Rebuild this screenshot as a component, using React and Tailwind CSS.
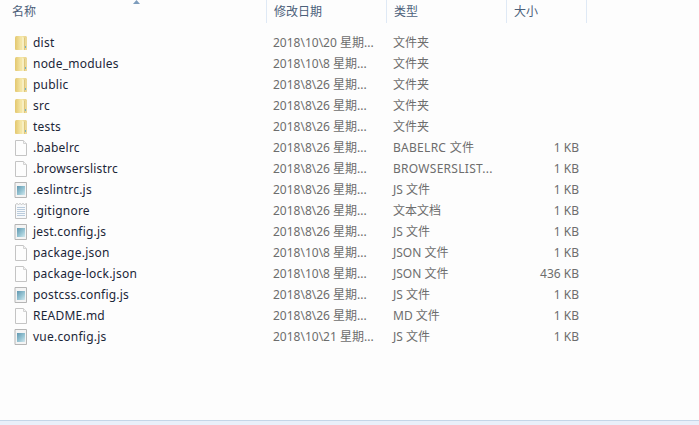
const files = [
  { name: 'dist', date: '2018\\10\\20 星期...', type: '文件夹', icon: 'folder' },
  { name: 'node_modules', date: '2018\\10\\8 星期...', type: '文件夹', icon: 'folder' },
  { name: 'public', date: '2018\\8\\26 星期...', type: '文件夹', icon: 'folder' },
  { name: 'src', date: '2018\\8\\26 星期...', type: '文件夹', icon: 'folder' },
  { name: 'tests', date: '2018\\8\\26 星期...', type: '文件夹', icon: 'folder' },
  { name: '.babelrc', date: '2018\\8\\26 星期...', type: 'BABELRC 文件', size: '1 KB', icon: 'blank', wide: true },
  { name: '.browserslistrc', date: '2018\\8\\26 星期...', type: 'BROWSERSLIST...', size: '1 KB', icon: 'blank', wide: true },
  { name: '.eslintrc.js', date: '2018\\8\\26 星期...', type: 'JS 文件', size: '1 KB', icon: 'script' },
  { name: '.gitignore', date: '2018\\8\\26 星期...', type: '文本文档', size: '1 KB', icon: 'text' },
  { name: 'jest.config.js', date: '2018\\8\\26 星期...', type: 'JS 文件', size: '1 KB', icon: 'script' },
  { name: 'package.json', date: '2018\\10\\8 星期...', type: 'JSON 文件', size: '1 KB', icon: 'blank' },
  { name: 'package-lock.json', date: '2018\\10\\8 星期...', type: 'JSON 文件', size: '436 KB', icon: 'blank' },
  { name: 'postcss.config.js', date: '2018\\8\\26 星期...', type: 'JS 文件', size: '1 KB', icon: 'script' },
  { name: 'README.md', date: '2018\\8\\26 星期...', type: 'MD 文件', size: '1 KB', icon: 'blank' },
  { name: 'vue.config.js', date: '2018\\10\\21 星期...', type: 'JS 文件', size: '1 KB', icon: 'script' },
]

function FolderIcon() {
  return (
    <svg width="14" height="16" viewBox="0 0 14 16">
      <defs>
        <linearGradient id="folderBack" x1="0" y1="0" x2="1" y2="0">
          <stop offset="0" stopColor="#e3c76e" />
          <stop offset="0.5" stopColor="#f5e7a8" />
          <stop offset="1" stopColor="#e6cf86" />
        </linearGradient>
      </defs>
      <path d="M1 2.5 Q1 1 2.5 1 H11.5 Q13 1 13 2.5 V14 Q13 15 12 15 H2 Q1 15 1 14 Z" fill="url(#folderBack)" />
      <path d="M8 1.5 L10.5 3 V15 H8 Z" fill="#f8efc0" />
      <path d="M10.5 3 L11 2.5 V15 H10.5 Z" fill="#c9a94f" />
      <path d="M11 2.5 L13 2 V14 Q13 15 12 15 H11 Z" fill="#ecd998" />
      <rect x="11" y="11" width="1" height="2" fill="#6fb0cc" />
    </svg>
  )
}

function PageIcon() {
  return (
    <svg width="14" height="16" viewBox="0 0 14 16">
      <path d="M1.5 .5 H9.5 L12.5 3.5 V15.5 H1.5 Z" fill="#fdfdfd" stroke="#c4c4c4" />
      <path d="M9.5 .5 V3.5 H12.5" fill="#f2f2f2" stroke="#d2d2d2" />
    </svg>
  )
}

function ScriptIcon() {
  return (
    <svg width="14" height="16" viewBox="0 0 14 16">
      <defs>
        <linearGradient id="scriptFill" x1="0" y1="0" x2="1" y2="1">
          <stop offset="0" stopColor="#5f97b0" />
          <stop offset="0.6" stopColor="#9cc8d6" />
          <stop offset="1" stopColor="#d3e8ee" />
        </linearGradient>
      </defs>
      <path d="M1 .5 H12.5 V15.5 H1 Z" fill="#f4f4f4" stroke="#b5b5b5" />
      <rect x="3" y="4" width="8" height="9" fill="url(#scriptFill)" />
    </svg>
  )
}

function TextIcon() {
  return (
    <svg width="14" height="16" viewBox="0 0 14 16">
      <path d="M1.5 1.5 L3 .5 L4.5 1.5 L6 .5 L7.5 1.5 L9 .5 L10.5 1.5 L12.5 .5 V15.5 H1.5 Z" fill="#f7f9fb" stroke="#c2c2c2" />
      <path d="M3 4.5 H11 M3 6.5 H11 M3 8.5 H11 M3 10.5 H11 M3 12.5 H11" stroke="#b9cbdc" />
    </svg>
  )
}

function FileIcon({ kind }) {
  if (kind === 'folder') return <FolderIcon />
  if (kind === 'script') return <ScriptIcon />
  if (kind === 'text') return <TextIcon />
  return <PageIcon />
}

function HeaderCell({ label, width }) {
  return (
    <div className={`${width} flex h-[23px] items-center border-r border-[#dfe9f5] pl-[7px]`}>
      {label}
    </div>
  )
}

export default function App() {
  return (
    <div className="flex h-[425px] w-[699px] flex-col overflow-hidden bg-[#fdfdfd] font-['Noto_Sans','Noto_Sans_CJK_SC',sans-serif] text-[12px]">
      <div className="relative flex text-[#4c607a]">
        <div className="flex h-[23px] w-[267px] items-center border-r border-[#dfe9f5] pl-[12px]">名称</div>
        <HeaderCell label="修改日期" width="w-[120px]" />
        <HeaderCell label="类型" width="w-[120px]" />
        <HeaderCell label="大小" width="w-[80px]" />
        <svg className="absolute left-[133px] top-0" width="7" height="4" viewBox="0 0 7 4">
          <path d="M0 4 L3.5 0 L7 4 Z" fill="#7d9cbc" />
        </svg>
      </div>
      <div className="mt-[9px] flex-1">
        {files.map((file) => (
          <div key={file.name} className="flex h-[21px] items-center">
            <div className="flex w-[267px] items-center pl-[14px]">
              <span className="flex w-[19px]">
                <FileIcon kind={file.icon} />
              </span>
              <span className="tracking-[0.22px] text-[#1b2638]">{file.name}</span>
            </div>
            <div className="w-[120px] pl-[6px] text-[#6d6d6d]">{file.date}</div>
            <div className={file.wide ? 'w-[120px] pl-[6px] tracking-[0.28px] text-[#6d6d6d]' : 'w-[120px] pl-[6px] text-[#6d6d6d]'}>{file.type}</div>
            <div className="w-[72px] text-right text-[#6d6d6d]">{file.size}</div>
          </div>
        ))}
      </div>
      <div className="h-[5px] border-t border-[#c5d6e8] bg-[#e9f0fa]" />
    </div>
  )
}
